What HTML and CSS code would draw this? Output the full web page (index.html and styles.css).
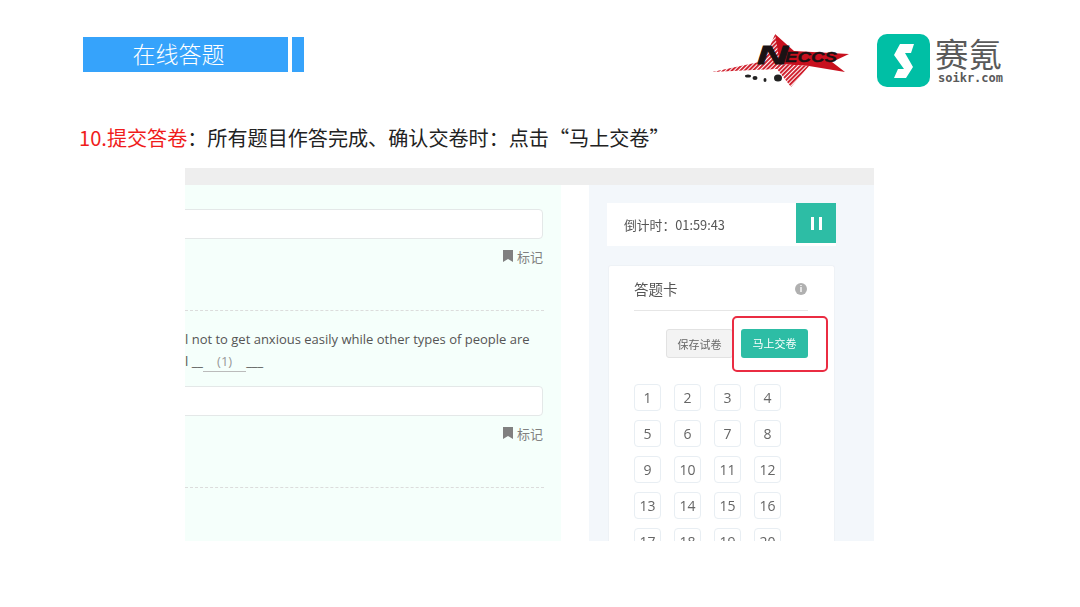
FILE: index.html
```html
<!DOCTYPE html>
<html lang="zh-CN">
<head>
<meta charset="UTF-8">
<title>在线答题</title>
<link rel="stylesheet" href="styles.css">
</head>
<body>

<div class="header">
  <div class="title">
    <div class="title-main">在线答题</div>
    <div class="title-tab"></div>
  </div>
  <div class="logos">
    <svg class="neccs" width="138" height="54" viewBox="0 0 138 54">
      <defs>
        <pattern id="stripes" width="3" height="3" patternUnits="userSpaceOnUse" patternTransform="rotate(45)">
          <rect width="3" height="3" fill="#fff"/>
          <rect width="1.9" height="3" fill="#cf1a28"/>
        </pattern>
      </defs>
      <polygon points="63,0 82,17 137,20 120,28 133,38 97,32 65,30" fill="#c8101e"/>
      <polygon points="0,38 52,27 63,0 68,30 97,32 79,53 65,35" fill="url(#stripes)"/>
      <text x="45" y="30" class="neccs-n" textLength="31" lengthAdjust="spacingAndGlyphs">N</text>
      <text x="73" y="28" class="neccs-rest" textLength="52" lengthAdjust="spacingAndGlyphs">ECCS</text>
      <ellipse cx="36" cy="42" rx="3" ry="1.5" fill="#222"/>
      <ellipse cx="43" cy="44" rx="2.5" ry="2" fill="#222"/>
      <ellipse cx="53" cy="46" rx="1.5" ry="2" fill="#222"/>
      <ellipse cx="66" cy="44" rx="4" ry="3.5" fill="#222"/>
    </svg>
    <svg class="saikr-icon" width="53" height="53" viewBox="0 0 53 53">
      <rect width="53" height="53" rx="10" fill="#00bfa5"/>
      <polygon points="23,10 37,10 34,19 28,19 36,33 29,44 17,44 21,35 27,35 17,21" fill="#fff"/>
    </svg>
    <div class="saikr-text">
      <div class="saikr-cn">赛氪</div>
      <div class="saikr-en">soikr.com</div>
    </div>
  </div>
</div>

<div class="heading"><span class="red">10.提交答卷</span>：所有题目作答完成、确认交卷时：点击“马上交卷”</div>

<div class="shot">
  <div class="shot-top"></div>
  <div class="shot-body">
    <div class="questions">
      <div class="answer"></div>
      <div class="mark">
        <svg width="10" height="12" viewBox="0 0 10 12"><polygon points="0,0 10,0 10,12 5,9 0,12" fill="#808080"/></svg>
        标记
      </div>
      <div class="dash"></div>
      <div class="q-text">l not to get anxious easily while other types of people are<br>l <span class="blank">__<u>(1)</u>___</span></div>
      <div class="answer"></div>
      <div class="mark">
        <svg width="10" height="12" viewBox="0 0 10 12"><polygon points="0,0 10,0 10,12 5,9 0,12" fill="#808080"/></svg>
        标记
      </div>
      <div class="dash"></div>
    </div>
    <div class="gap"></div>
    <div class="side">
      <div class="timer">
        <div class="timer-text">倒计时：01:59:43</div>
        <div class="pause"><i></i><i></i></div>
      </div>
      <div class="card">
        <div class="card-head">
          <span>答题卡</span>
          <span class="info">i</span>
        </div>
        <div class="actions">
          <div class="btn btn-save">保存试卷</div>
          <div class="btn btn-submit">马上交卷</div>
          <div class="highlight"></div>
        </div>
        <div class="grid">
          <div class="cell">1</div><div class="cell">2</div><div class="cell">3</div><div class="cell">4</div>
          <div class="cell">5</div><div class="cell">6</div><div class="cell">7</div><div class="cell">8</div>
          <div class="cell">9</div><div class="cell">10</div><div class="cell">11</div><div class="cell">12</div>
          <div class="cell">13</div><div class="cell">14</div><div class="cell">15</div><div class="cell">16</div>
          <div class="cell">17</div><div class="cell">18</div><div class="cell">19</div><div class="cell">20</div>
        </div>
      </div>
    </div>
  </div>
</div>

</body>
</html>
```

FILE: styles.css
```css
html, body { margin:0; padding:0; }
body { width:1080px; height:607px; overflow:hidden; background:#fff; font-family:"Noto Sans CJK SC", "Noto Sans", sans-serif; color:#222; }

.header { display:flex; justify-content:space-between; align-items:flex-start; padding:34px 77px 0 83px; height:54px; }
.title { display:flex; gap:4px; margin-top:3px; }
.title-main { width:205px; height:35px; line-height:33px; background:#36a3fb; color:#fff; font-size:23px; font-weight:300; text-align:center; padding-right:14px; box-sizing:border-box; }
.title-tab { width:12px; height:35px; background:#36a3fb; }

.logos { display:flex; align-items:flex-start; }
.neccs { margin-right:27px; }
.neccs-n { font:italic bold 26px "Liberation Sans", sans-serif; fill:#1a1214; stroke:#1a1214; stroke-width:.8; }
.neccs-rest { font:italic bold 15px "Liberation Sans", sans-serif; fill:#1a1214; stroke:#1a1214; stroke-width:.3; }
.saikr-text { margin-left:5px; width:68px; color:#5a5a5a; }
.saikr-cn { font-size:33.5px; line-height:30px; margin-top:4px; font-weight:400; white-space:nowrap; }
.saikr-en { font:bold 12px/14px "DejaVu Sans Mono", monospace; margin-left:3px; margin-top:3px; }

.heading { margin:33px 0 0 79px; height:34px; line-height:34px; font-size:20.1px; color:#222; white-space:nowrap; }
.red { color:#f01c1c; }

.shot { margin:13px 0 0 185px; width:689px; height:373px; overflow:hidden; filter:blur(.3px); }
.shot-top { height:17px; background:#eeeeee; }
.shot-body { display:flex; height:356px; }

.questions { width:376px; background:#f5fffb; padding-top:24px; padding-right:18px; box-sizing:border-box; overflow:hidden; flex:none; }
.gap { width:28px; flex:none; }
.answer { height:30px; margin-left:-10px; background:#fff; border:1px solid #e4e8e8; border-radius:4px; box-sizing:border-box; }
.mark { display:flex; justify-content:flex-end; align-items:center; gap:4px; height:18px; margin-top:8px; font-size:13px; color:#808080; }
.dash { border-top:1px dashed #dcdcdc; margin-top:45px; margin-right:-1px; }
.q-text { margin-top:17px; margin-bottom:14px; font:13px/22px "Open Sans", sans-serif; color:#555; white-space:nowrap; }
.blank u { display:inline-block; padding:0 14px; line-height:19px; color:#999; text-decoration:none; border-bottom:1px solid #bbb; }

.side { flex:1; background:#f3f7fb; padding:18px 0 0 18px; }
.timer { display:flex; justify-content:space-between; width:229px; height:43px; background:#fff; }
.timer-text { padding-left:17px; line-height:44px; font-size:12.8px; color:#555; }
.pause { display:flex; justify-content:center; align-items:center; gap:5px; width:40px; height:40px; background:#2dbda5; }
.pause i { display:block; width:3px; height:13px; background:#fff; }

.card { margin:19px 0 0 1px; width:227px; height:300px; background:#fff; border:1px solid #eef2f6; border-bottom:0; box-sizing:border-box; border-radius:3px 3px 0 0; padding:0 26px 0 25px; }
.card-head { display:flex; justify-content:space-between; align-items:center; height:44px; border-bottom:1px solid #e6e6e6; font-size:14.5px; color:#555; }
.info { width:12px; height:12px; margin:2px 1px 0 0; border-radius:50%; background:#b0b0b0; color:#fff; font:bold 9px/12px "Liberation Sans", sans-serif; text-align:center; }

.actions { position:relative; display:flex; justify-content:flex-end; gap:8px; margin-top:18px; }
.btn { width:67px; height:29px; line-height:28px; border-radius:3px; font-size:11px; text-align:center; box-sizing:border-box; }
.btn-save { background:#f3f3f3; border:1px solid #e2e2e2; color:#666; }
.btn-submit { background:#2dbda5; color:#fff; }
.highlight { position:absolute; right:-20px; top:-13px; width:96px; height:56px; box-sizing:border-box; border:2px solid #ea2c42; border-radius:5px; }

.grid { display:grid; grid-template-columns:repeat(4, 27px); column-gap:13px; row-gap:9px; margin-top:26px; }
.cell { height:27px; box-sizing:border-box; border:1px solid #e8eef3; border-radius:4px; font:14px/26px "Open Sans", sans-serif; color:#666; text-align:center; }
```
